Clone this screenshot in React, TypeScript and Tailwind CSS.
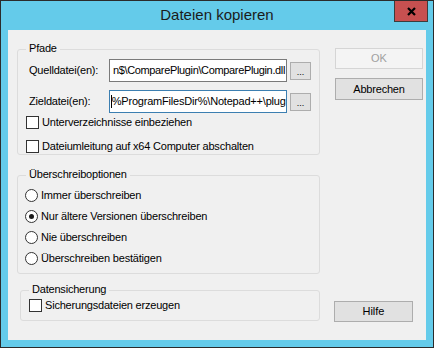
import React from 'react'

const font = { fontFamily: '"Liberation Sans", Arial, sans-serif' }

function CheckBox({ label }: { label: string }) {
  return (
    <label className="flex h-[13px] items-center gap-[3px]">
      <span className="box-border h-[13px] w-[13px] border border-[#333333] bg-white" />
      <span className="text-[11px] leading-[13px] tracking-[-0.2px] text-black">{label}</span>
    </label>
  )
}

function Radio({ label, checked }: { label: string; checked?: boolean }) {
  return (
    <label className="flex h-[21px] items-center gap-[3px] -ml-px">
      <span className="box-border flex h-[13px] w-[13px] items-center justify-center rounded-full border border-[#333333] bg-white">
        {checked && <span className="h-[5px] w-[5px] rounded-full bg-[#1a1a1a]" />}
      </span>
      <span className="text-[11px] leading-[13px] tracking-[-0.2px] text-black">{label}</span>
    </label>
  )
}

// group box: the caption sits on the top border line
function Group({ title, className, children }: { title: string; className?: string; children: React.ReactNode }) {
  return (
    <div className={'box-border flex flex-col rounded-[3px] border border-[#dcdcdc] px-[8px] ' + (className ?? '')}>
      <span className="-mt-[9px] self-start bg-[#f0f0f0] px-[3px] text-[11px] leading-[14px] tracking-[-0.2px] text-black">
        {title}
      </span>
      {children}
    </div>
  )
}

function PathRow({ label, value, focused }: { label: string; value: string; focused?: boolean }) {
  return (
    <div className="flex items-center">
      <span className="w-[83px] pl-[3px] text-[11px] leading-[13px] tracking-[-0.2px] text-black">{label}</span>
      <div
        className={
          'box-border flex h-[23px] w-[179px] items-center overflow-hidden whitespace-nowrap border bg-white px-[1px] text-[11px] text-black ' +
          (focused ? 'border-[#3c7fb1] justify-start tracking-[-0.2px]' : 'border-[#7a7a7a] justify-end tracking-[-0.35px]')
        }
      >
        {focused && <span className="h-[13px] w-px shrink-0 bg-black" />}
        <span className="shrink-0">{value}</span>
      </div>
      <button className="ml-[3px] box-border flex h-[18px] w-[21px] items-end justify-center border border-[#adadad] bg-[#e1e1e1] pb-[3px] text-[9px] leading-[8px] text-black">
        ...
      </button>
    </div>
  )
}

export default function App() {
  return (
    <div
      className="box-border flex h-[348px] w-[434px] flex-col border border-[#2b2b2b] bg-[#64cbea]"
      style={font}
    >
      {/* Title bar */}
      <div className="flex h-[29px] shrink-0">
        <div className="w-[39px]" />
        <div className="flex flex-1 items-center justify-center text-[15px] text-[#1b1b1b]">Dateien kopieren</div>
        <button className="box-border mr-[5px] flex h-[21px] w-[34px] items-center justify-center border border-t-0 border-[#3c3c3c] bg-[#c75050]">
          <svg width="9" height="9" viewBox="0 0 9 9">
            <path d="M1 1 L8 8 M8 1 L1 8" stroke="#000" strokeWidth="2.2" />
          </svg>
        </button>
      </div>

      {/* Client area */}
      <div className="mx-[7px] mb-[7px] flex flex-1 bg-[#f0f0f0] pl-[9px]">
        <div className="flex w-[303px] flex-col pt-[19px]">
          <Group title="Pfade" className="pb-[1px]">
            <div className="mt-[4px]">
              <PathRow label="Quelldatei(en):" value="n$\ComparePlugin\ComparePlugin.dll" />
            </div>
            <div className="mt-[8px]">
              <PathRow label="Zieldatei(en):" value="%ProgramFilesDir%\Notepad++\plug" focused />
            </div>
            <div className="mt-[3px]">
              <CheckBox label="Unterverzeichnisse einbeziehen" />
            </div>
            <div className="mt-[11px]">
              <CheckBox label="Dateiumleitung auf x64 Computer abschalten" />
            </div>
          </Group>

          <Group title="Überschreiboptionen" className="mt-[20px] pb-[4px]">
            <div className="mt-[4px]">
              <Radio label="Immer überschreiben" />
              <Radio label="Nur ältere Versionen überschreiben" checked />
              <Radio label="Nie überschreiben" />
              <Radio label="Überschreiben bestätigen" />
            </div>
          </Group>

          <Group title="Datensicherung" className="mt-[16px] ml-[3px] pb-[8px]">
            <div className="mt-[3px]">
              <CheckBox label="Sicherungsdateien erzeugen" />
            </div>
          </Group>
        </div>

        <div className="ml-[15px] flex flex-col pt-[18px] pb-[18px]">
          <button className="box-border h-[21px] w-[88px] border border-[#d5d5d5] bg-[#f4f4f4] text-[11px] text-[#a0a0a0]">
            OK
          </button>
          <button className="mt-[9px] box-border h-[22px] w-[88px] border border-[#adadad] bg-[#e1e1e1] text-[11px] tracking-[-0.2px] text-black">
            Abbrechen
          </button>
          <button className="mt-auto -ml-px box-border h-[21px] w-[79px] border border-[#adadad] bg-[#e1e1e1] text-[11px] text-black">
            Hilfe
          </button>
        </div>
      </div>
    </div>
  )
}
